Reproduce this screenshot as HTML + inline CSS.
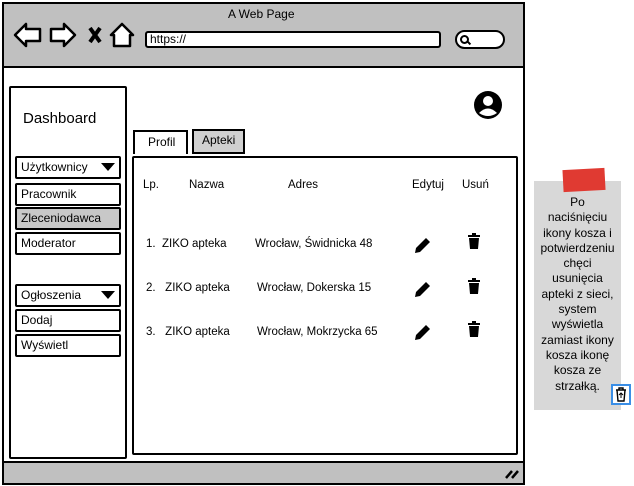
<!DOCTYPE html>
<html><head><meta charset="utf-8"><style>
*{margin:0;padding:0;box-sizing:border-box}
body{width:634px;height:486px;background:#fff;position:relative;overflow:hidden;font-family:"Liberation Sans","DejaVu Sans",sans-serif;color:#000;font-size:12px}
.a{position:absolute}
.box{position:absolute;border:2px solid #000;border-radius:2px;background:#fff}
.btn{position:absolute;border:2px solid #000;border-radius:2px;background:#fff;padding-left:4px;font-size:12px;line-height:19px;height:23px}
.t{position:absolute;white-space:nowrap;font-size:11.5px}
</style></head><body>
<div class="a" style="left:2px;top:2px;width:523px;height:483px;border:2px solid #000;background:#fff"></div>
<div class="a" style="left:4px;top:4px;width:519px;height:64px;background:#c0c0c0;border-bottom:2px solid #000"></div>
<div class="t" style="left:228px;top:7px;font-size:12px">A Web Page</div>
<svg class="a" style="left:12px;top:20px" width="125" height="30" viewBox="0 0 125 30">
<g fill="#fff" stroke="#000" stroke-width="2.5" stroke-linejoin="round">
<path d="M3 15 L14 4 L14 9 L28 9 L28 21 L14 21 L14 26 Z"/>
<path d="M63 15 L52 4 L52 9 L39 9 L39 21 L52 21 L52 26 Z"/>
<path d="M110 4 L99 15 L102 15 L102 26 L118 26 L118 15 L121 15 Z"/>
</g>
<path d="M78 8 L88 22 M88 8 L78 22" stroke="#000" stroke-width="4"/>
</svg>
<div class="a" style="left:145px;top:31px;width:296px;height:17px;border:2px solid #000;border-radius:3px;background:#fff;font-size:12px;line-height:13px;padding-left:3px">https://</div>
<div class="a" style="left:455px;top:30px;width:50px;height:19px;border:2px solid #000;border-radius:10px;background:#fff"></div>
<div class="a" style="left:460px;top:35px;width:9px;height:9px;border:2px solid #000;border-radius:50%"></div>
<div class="a" style="left:467px;top:42px;width:4px;height:2px;background:#000;transform:rotate(45deg)"></div>

<div class="box" style="left:9px;top:86px;width:118px;height:373px"></div>
<div class="t" style="left:23px;top:110px;font-size:15px">Dashboard</div>
<div class="btn" style="left:15px;top:156px;width:106px">Użytkownicy</div>
<div class="a" style="left:101px;top:163px;width:0;height:0;border-left:7px solid transparent;border-right:7px solid transparent;border-top:8px solid #000"></div>
<div class="btn" style="left:15px;top:183px;width:106px">Pracownik</div>
<div class="btn" style="left:15px;top:207px;width:106px;background:#c8c8c8">Zleceniodawca</div>
<div class="btn" style="left:15px;top:232px;width:106px">Moderator</div>
<div class="btn" style="left:15px;top:284px;width:106px">Ogłoszenia</div>
<div class="a" style="left:101px;top:291px;width:0;height:0;border-left:7px solid transparent;border-right:7px solid transparent;border-top:8px solid #000"></div>
<div class="btn" style="left:15px;top:309px;width:106px">Dodaj</div>
<div class="btn" style="left:15px;top:334px;width:106px">Wyświetl</div>

<div class="a" style="left:133px;top:130px;width:55px;height:24px;border:2px solid #000;border-bottom:none;background:#fff;padding:3px 0 0 13px;font-size:12px">Profil</div>
<div class="a" style="left:192px;top:129px;width:53px;height:25px;border:2px solid #000;background:#d0d0d0;padding:2px 0 0 8px;font-size:12px">Apteki</div>
<div class="box" style="left:132px;top:156px;width:386px;height:299px"></div>

<svg class="a" style="left:472px;top:90px" width="32" height="30" viewBox="0 0 32 30"><circle cx="16" cy="15" r="14" fill="#000"/><circle cx="16" cy="11" r="5" fill="#fff"/><path d="M7 23 Q16 14 25 23 Q16 29 7 23Z" fill="#fff"/></svg>

<div class="t" style="left:143px;top:179px">Lp.</div>
<div class="t" style="left:189px;top:179px">Nazwa</div>
<div class="t" style="left:288px;top:179px">Adres</div>
<div class="t" style="left:412px;top:179px">Edytuj</div>
<div class="t" style="left:462px;top:179px">Usuń</div>

<div class="t" style="left:146px;top:238px">1.&nbsp; ZIKO apteka</div>
<div class="t" style="left:255px;top:238px">Wrocław, Świdnicka 48</div>
<div class="t" style="left:146px;top:282px">2.&nbsp;&nbsp; ZIKO apteka</div>
<div class="t" style="left:257px;top:282px">Wrocław, Dokerska 15</div>
<div class="t" style="left:146px;top:326px">3.&nbsp;&nbsp; ZIKO apteka</div>
<div class="t" style="left:257px;top:326px">Wrocław, Mokrzycka 65</div>

<svg class="a" style="left:413px;top:235px" width="20" height="20" viewBox="0 0 20 20"><path d="M2 18 L3 13 L13 3 L17 7 L7 17 Z" fill="#000"/></svg>
<svg class="a" style="left:413px;top:279px" width="20" height="20" viewBox="0 0 20 20"><path d="M2 18 L3 13 L13 3 L17 7 L7 17 Z" fill="#000"/></svg>
<svg class="a" style="left:413px;top:322px" width="20" height="20" viewBox="0 0 20 20"><path d="M2 18 L3 13 L13 3 L17 7 L7 17 Z" fill="#000"/></svg>
<svg class="a" style="left:467px;top:233px" width="14" height="16" viewBox="0 0 14 16"><rect x="1" y="2" width="12" height="2" fill="#000"/><rect x="5" y="0" width="4" height="2" fill="#000"/><path d="M2 5 H12 L11 16 H3Z" fill="#000"/></svg>
<svg class="a" style="left:467px;top:278px" width="14" height="16" viewBox="0 0 14 16"><rect x="1" y="2" width="12" height="2" fill="#000"/><rect x="5" y="0" width="4" height="2" fill="#000"/><path d="M2 5 H12 L11 16 H3Z" fill="#000"/></svg>
<svg class="a" style="left:467px;top:321px" width="14" height="16" viewBox="0 0 14 16"><rect x="1" y="2" width="12" height="2" fill="#000"/><rect x="5" y="0" width="4" height="2" fill="#000"/><path d="M2 5 H12 L11 16 H3Z" fill="#000"/></svg>

<div class="a" style="left:4px;top:461px;width:519px;height:22px;background:#c0c0c0;border-top:2px solid #000"></div>
<svg class="a" style="left:504px;top:468px" width="16" height="12"><path d="M2 10 L8 3 M8 10 L14 3" stroke="#000" stroke-width="2.5"/></svg>

<div class="a" style="left:534px;top:181px;width:87px;height:229px;background:#d8d8d8"></div>
<div class="a" style="left:563px;top:169px;width:42px;height:22px;background:#e03a32;transform:rotate(-3deg)"></div>
<div class="a" style="left:532px;top:195px;width:91px;text-align:center;font-size:12px;line-height:15.3px">Po<br>naciśnięciu<br>ikony kosza i<br>potwierdzeniu<br>chęci<br>usunięcia<br>apteki z sieci,<br>system<br>wyświetla<br>zamiast ikony<br>kosza ikonę<br>kosza ze<br>strzałką.</div>
<div class="a" style="left:611px;top:384px;width:20px;height:21px;border:2px solid #3a8ee6;background:#fff"></div>
<svg class="a" style="left:614px;top:387px" width="14" height="15" viewBox="0 0 14 15"><path d="M2 3 H12 M5 3 V1 H9 V3 M3 3 L4 14 H10 L11 3" fill="none" stroke="#000" stroke-width="1.4"/><path d="M5 8 L7 6 L9 8 M7 6 V11" fill="none" stroke="#000" stroke-width="1"/></svg>
</body></html>
